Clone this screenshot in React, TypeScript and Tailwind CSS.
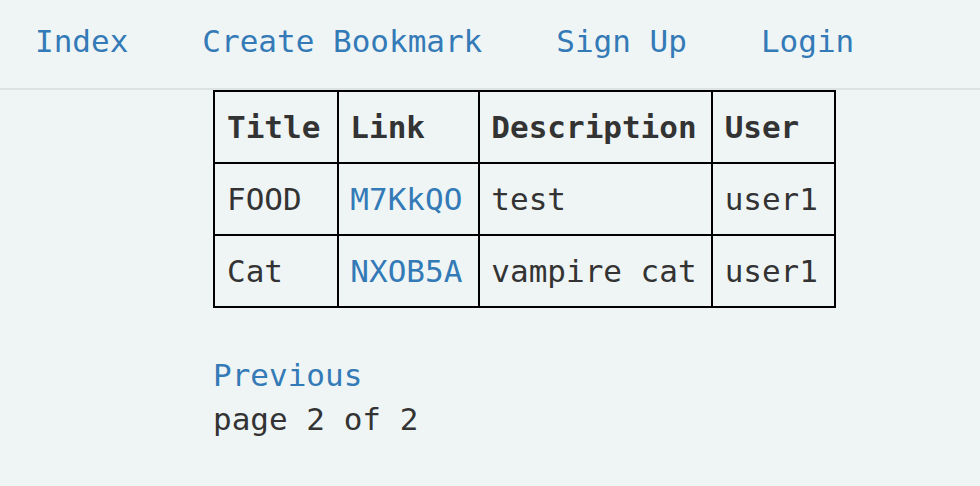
const rows = [
  { title: "FOOD", link: "M7KkQO", description: "test", user: "user1" },
  { title: "Cat", link: "NXOB5A", description: "vampire cat", user: "user1" },
];

// per-column padding, tuned to the column widths in the shot
const cols = ["pl-[12px] pr-[17px]", "pl-[11px] pr-[16px]", "pl-[11px] pr-[14px]", "pl-[12px] pr-[16px]"];

export default function App() {
  return (
    <div className="min-h-[486px] bg-[#eff5f5] text-[#333] text-[31px] leading-[44px] font-['DejaVu_Sans_Mono',monospace]">
      <nav className="flex gap-[74px] pl-[35px] pt-[19px] pb-[25px] border-b-2 border-[#dde2e2]">
        <a href="#" className="text-[#337ab7]">Index</a>
        <a href="#" className="text-[#337ab7]">Create Bookmark</a>
        <a href="#" className="text-[#337ab7]">Sign Up</a>
        <a href="#" className="text-[#337ab7]">Login</a>
      </nav>

      <div className="ml-[213px]">
        <table className="border-collapse border-2 border-black">
          <thead>
            <tr>
              {["Title", "Link", "Description", "User"].map((h, i) => (
                <th key={h} className={`border-2 border-black py-[13px] text-left font-bold ${cols[i]}`}>
                  {h}
                </th>
              ))}
            </tr>
          </thead>
          <tbody>
            {rows.map((r) => (
              <tr key={r.link}>
                <td className={`border-2 border-black py-[13px] ${cols[0]}`}>{r.title}</td>
                <td className={`border-2 border-black py-[13px] ${cols[1]}`}>
                  <a href="#" className="text-[#337ab7]">{r.link}</a>
                </td>
                <td className={`border-2 border-black py-[13px] ${cols[2]}`}>{r.description}</td>
                <td className={`border-2 border-black py-[13px] ${cols[3]}`}>{r.user}</td>
              </tr>
            ))}
          </tbody>
        </table>

        <div className="mt-[45px]">
          <a href="#" className="text-[#337ab7]">Previous</a>
          <p>page 2 of 2</p>
        </div>
      </div>
    </div>
  );
}
